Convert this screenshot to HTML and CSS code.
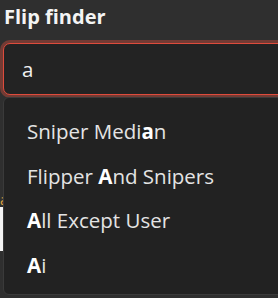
FILE: index.html
```html
<!DOCTYPE html>
<html>
<head>
<meta charset="utf-8">
<link rel="stylesheet" href="styles.css">
</head>
<body>
<div class="page">
  <h1 class="title">Flip finder</h1>
  <div class="field">
    <div class="input">a</div>
    <div class="under">
      <span class="under-label">a</span>
      <div class="under-box"></div>
    </div>
    <ul class="menu">
      <li class="item">Sniper Medi<b>a</b>n</li>
      <li class="item">Flipper <b>A</b>nd Snipers</li>
      <li class="item"><b>A</b>ll Except User</li>
      <li class="item"><b>A</b>i</li>
    </ul>
  </div>
</div>
</body>
</html>
```

FILE: styles.css
```css
html, body {
  margin: 0;
  padding: 0;
  background: #2f2f2f;
  overflow: hidden;
}
.page {
  width: 278px;
  height: 298px;
  overflow: hidden;
  font-family: "Open Sans", "Noto Sans", sans-serif;
  color: #e8e8e8;
}
.title {
  margin: 0;
  padding: 0 0 0 4px;
  height: 40px;
  font-size: 20px;
  font-weight: 700;
  line-height: 34px;
  color: #f4f4f4;
}
.field {
  position: relative;
  margin-left: 3px;
  margin-top: 3px;
}
.input {
  width: 290px;
  height: 50px;
  box-sizing: content-box;
  border: 1px solid #de4b3c;
  border-radius: 7px;
  background: #232323;
  box-shadow: 0 0 0 3px rgba(200, 75, 60, 0.45);
  font-size: 20.5px;
  line-height: 50px;
  padding-left: 18px;
  color: #f0f0f0;
}
.under {
  margin-left: -3px;
  padding-top: 100px;
}
.under-label {
  display: block;
  font-size: 14px;
  line-height: 10px;
  color: #e0a040;
}
.under-box {
  width: 40px;
  height: 44px;
  margin-top: 2px;
  background: #f4f4f4;
}
.menu {
  position: absolute;
  left: 0;
  top: 54px;
  width: 300px;
  height: 198px;
  margin: 0;
  padding: 11px 0 0 0;
  box-sizing: border-box;
  list-style: none;
  background: #222222;
  border: 1px solid #3a3a3a;
  border-radius: 6px;
}
.item {
  height: 44.5px;
  line-height: 44px;
  padding-left: 23px;
  font-size: 20.5px;
  color: #e4e4e4;
}
.item b {
  font-weight: 700;
  color: #ffffff;
}
```
